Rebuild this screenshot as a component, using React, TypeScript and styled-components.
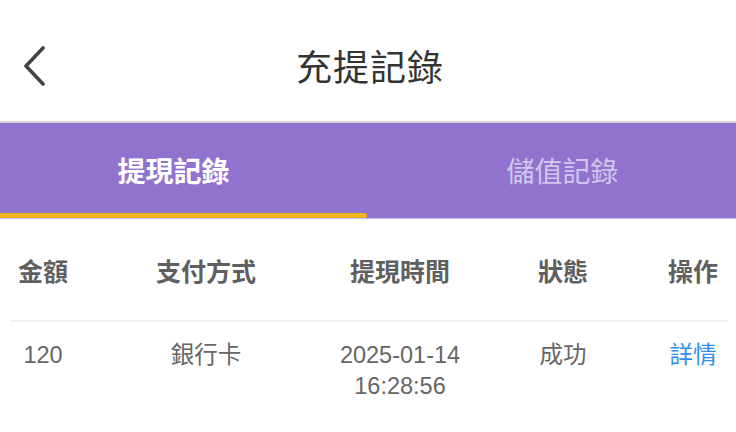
import React from "react";
import styled, {createGlobalStyle} from "styled-components";

const GlobalStyle = createGlobalStyle`
  html, body {
    margin: 0;
    padding: 0;
    background: #ffffff;
  }
  body {
    font-family: "Liberation Sans", "Noto Sans CJK TC", sans-serif;
  }
`;

const Page = styled.div`
  width: 736px;
  height: 432px;
  overflow: hidden;
  background: #ffffff;
`;

const NavBar = styled.div`
  height: 121px;
  display: flex;
  align-items: center;
  justify-content: center;
  position: relative;
  border-bottom: 2px solid #d4d4d4;
`;

const BackButton = styled.div`
  position: absolute;
  left: 18px;
  top: 44px;
  width: 32px;
  height: 44px;
  display: flex;
  align-items: center;
  justify-content: center;
`;

const Title = styled.div`
  font-family: "Noto Sans CJK TC", sans-serif;
  font-size: 36px;
  color: #333333;
  letter-spacing: 1px;
  margin-top: 8px;
  margin-left: 4px;
`;

const TabBar = styled.div`
  height: 95px;
  background: #9073cf;
  display: flex;
  border-bottom: 1px solid #c9b8ec;
`;

const Tab = styled.div<{ $active?: boolean }>`
  flex: 1;
  display: flex;
  align-items: center;
  justify-content: center;
  position: relative;
  font-family: "Noto Sans CJK TC", sans-serif;
  font-size: 28px;
  font-weight: ${p => (p.$active ? 700 : 400)};
  color: ${p => (p.$active ? "#ffffff" : "rgba(255,255,255,0.6)")};
  padding: ${p => (p.$active ? "0 20px 2px 0" : "0 0 2px 22px")};
`;

const Indicator = styled.div`
  position: absolute;
  left: 0;
  right: 0;
  bottom: 0;
  height: 5px;
  background: #f0b51b;
  border-radius: 0 3px 3px 0;
`;

const Table = styled.div`
  padding: 0 8px 0 10px;
`;

const Row = styled.div<{ $head?: boolean }>`
  display: grid;
  grid-template-columns: 66px 260px 128px 198px 62px;
  align-items: start;
  border-bottom: ${p => (p.$head ? "2px solid #f2f2f2" : "none")};
  padding: ${p => (p.$head ? "34px 0 33px" : "18px 0 0")};
`;

const HeadCell = styled.div`
  text-align: center;
  font-family: "Noto Sans CJK TC", sans-serif;
  font-size: 25px;
  font-weight: 700;
  line-height: 34px;
  color: #5f5f5f;
`;

const Cell = styled.div<{ $link?: boolean }>`
  text-align: center;
  font-family: "Liberation Sans", "Noto Sans CJK TC", sans-serif;
  font-size: 23.5px;
  line-height: 31px;
  color: ${p => (p.$link ? "#2f8ef0" : "#666666")};
  white-space: nowrap;
`;

const Chevron = () => (
    <svg width="24" height="40" viewBox="0 0 24 40">
        <path d="M21 2 L4 20 L21 38" fill="none" stroke="#444444" strokeWidth="3.6"
              strokeLinecap="round" strokeLinejoin="round"/>
    </svg>
);

export default function App() {
    return (
        <Page>
            <GlobalStyle/>
            <NavBar>
                <BackButton><Chevron/></BackButton>
                <Title>充提記錄</Title>
            </NavBar>
            <TabBar>
                <Tab $active>
                    提現記錄
                    <Indicator/>
                </Tab>
                <Tab>儲值記錄</Tab>
            </TabBar>
            <Table>
                <Row $head>
                    <HeadCell>金額</HeadCell>
                    <HeadCell>支付方式</HeadCell>
                    <HeadCell>提現時間</HeadCell>
                    <HeadCell>狀態</HeadCell>
                    <HeadCell>操作</HeadCell>
                </Row>
                <Row>
                    <Cell>120</Cell>
                    <Cell>銀行卡</Cell>
                    <Cell>2025-01-14<br/>16:28:56</Cell>
                    <Cell>成功</Cell>
                    <Cell $link>詳情</Cell>
                </Row>
            </Table>
        </Page>
    );
}
